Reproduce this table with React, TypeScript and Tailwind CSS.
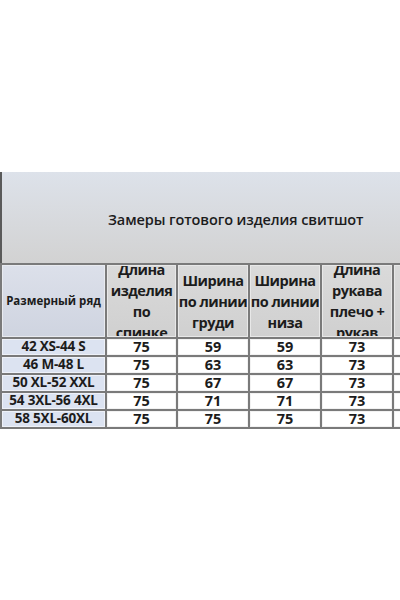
import React from "react";

const headers = [
  ["Длина", "изделия", "по", "спинке"],
  ["Ширина", "по линии", "груди"],
  ["Ширина", "по линии", "низа"],
  ["Длина", "рукава", "плечо +", "рукав"],
  [],
];

const rows = [
  { size: "42 XS-44 S", values: ["75", "59", "59", "73", ""] },
  { size: "46 M-48 L", values: ["75", "63", "63", "73", ""] },
  { size: "50 XL-52 XXL", values: ["75", "67", "67", "73", ""] },
  { size: "54 3XL-56 4XL", values: ["75", "71", "71", "73", ""] },
  { size: "58 5XL-60XL", values: ["75", "75", "75", "73", ""] },
];

export default function App() {
  return (
    <div
      className="w-[400px] h-[600px] bg-white overflow-hidden text-[#1c1c1c]"
      style={{ fontFamily: '"Open Sans", "Noto Sans", sans-serif' }}
    >
      <div className="h-[172px]" />

      {/* Title band */}
      <div className="h-[91px] w-[480px] border-l-2 border-[#5a5a5a] bg-gradient-to-b from-[#dde2ea] to-[#d2d2d2] flex items-center pl-[106px] pt-[4px]">
        <span className="text-[14.5px] font-semibold tracking-[-0.1px]">
          Замеры готового изделия свитшот
        </span>
      </div>

      {/* Table */}
      <div className="w-max grid grid-cols-[103px_69px_70px_70px_70px_70px] grid-rows-[72px_16px_16px_16px_16px_16px] gap-[2px] p-[2px] bg-[#7a7a7a]">
        <div className="flex items-center justify-center bg-gradient-to-b from-[#dce0ea] to-[#cfd4e0] border border-[#e9ebf0] text-[11.5px] font-bold">
          Размерный ряд
        </div>
        {headers.map((lines, i) => (
          <div
            key={i}
            className="flex flex-col items-center justify-center overflow-hidden bg-gradient-to-b from-[#dadada] to-[#d0d0d0] border border-[#e8e8e8] text-center text-[14.5px] font-bold leading-[21px] tracking-[-0.5px]"
          >
            {lines.map((l) => (
              <span key={l} className="whitespace-nowrap shrink-0">
                {l}
              </span>
            ))}
          </div>
        ))}

        {rows.map((r) => (
          <React.Fragment key={r.size}>
            <div className="flex items-center justify-center bg-[#dce3f1] border border-[#eef1f8] text-[13.5px] font-bold leading-none whitespace-nowrap tracking-[-0.2px]">
              {r.size}
            </div>
            {r.values.map((v, j) => (
              <div
                key={j}
                className="flex items-center justify-center bg-white border border-[#f2f2f2] text-[14.5px] font-bold leading-none"
              >
                {v}
              </div>
            ))}
          </React.Fragment>
        ))}
      </div>
    </div>
  );
}
